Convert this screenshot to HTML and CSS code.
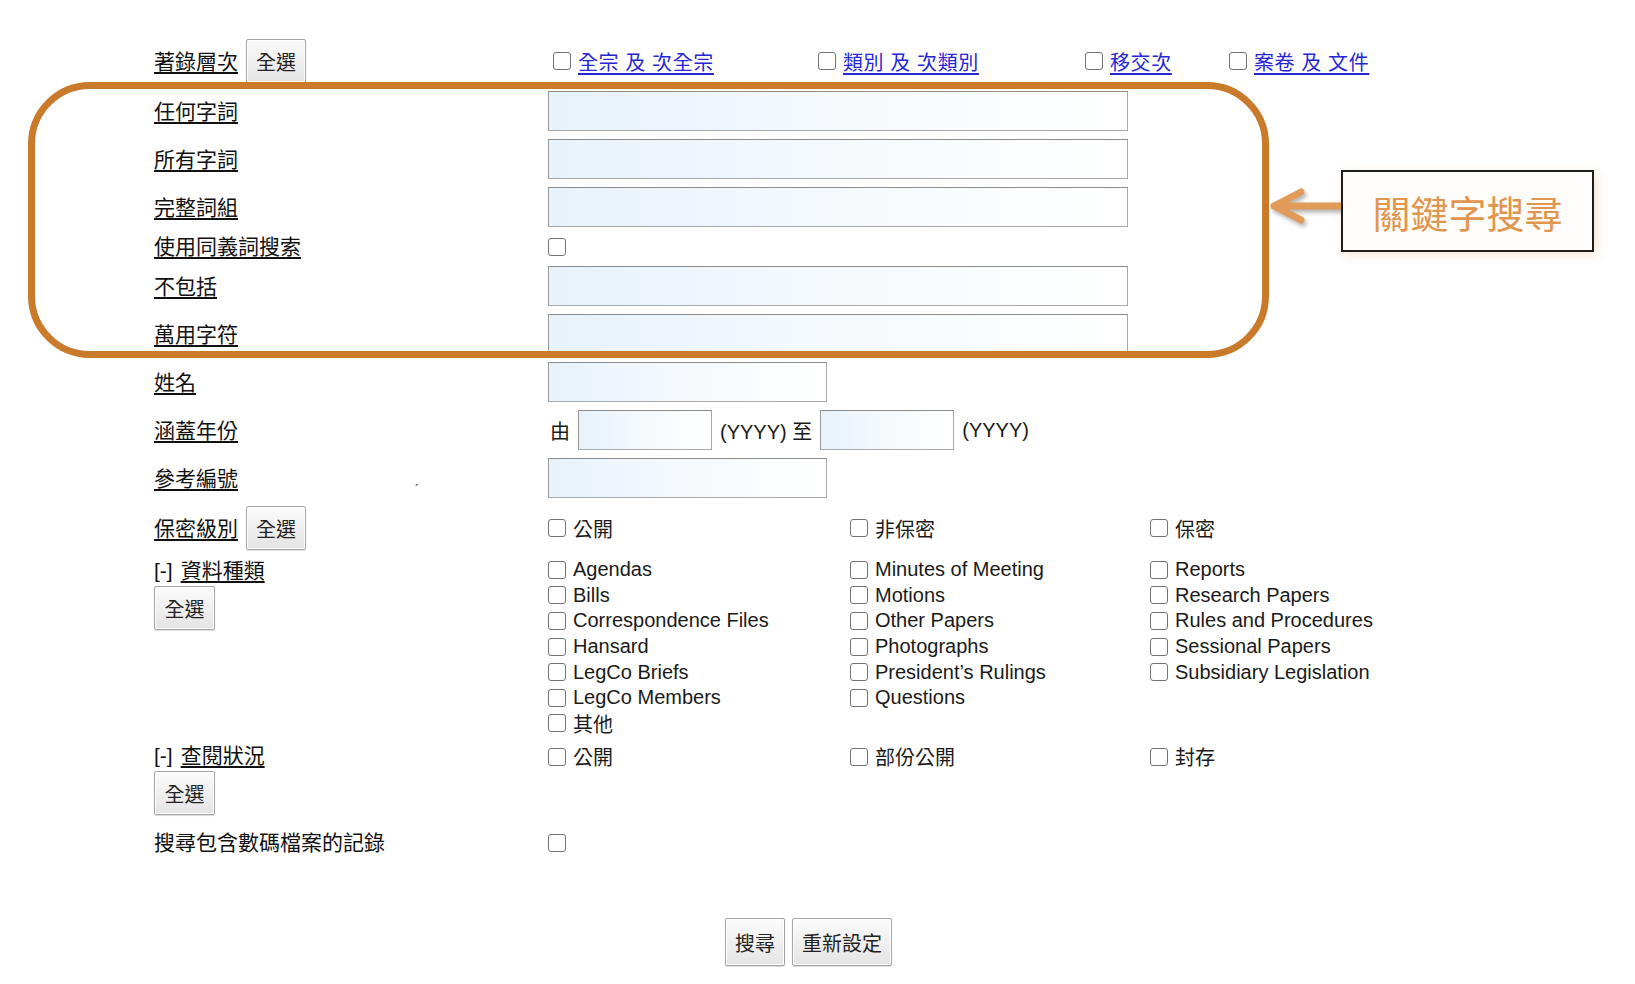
FILE: index.html
```html
<!DOCTYPE html>
<html lang="zh-Hant">
<head>
  <meta charset="UTF-8">
  <meta name="viewport" content="width=device-width, initial-scale=1.0">
  <title>進階搜尋</title>
  <link rel="stylesheet" href="styles.css">
</head>
<body>
  <div class="page">
    <form class="search-form">
      <!-- 著錄層次 -->
      <div class="row">
        <div class="label"><u>著錄層次</u> <button type="button" class="btn">全選</button></div>
        <div class="levels">
          <label class="opt"><input type="checkbox"><a href="#">全宗 及 次全宗</a></label>
          <label class="opt"><input type="checkbox"><a href="#">類別 及 次類別</a></label>
          <label class="opt"><input type="checkbox"><a href="#">移交次</a></label>
          <label class="opt"><input type="checkbox"><a href="#">案卷 及 文件</a></label>
        </div>
      </div>

      <div class="row">
        <div class="label"><u>任何字詞</u></div>
        <div><input type="text" class="field"></div>
      </div>
      <div class="row">
        <div class="label"><u>所有字詞</u></div>
        <div><input type="text" class="field"></div>
      </div>
      <div class="row">
        <div class="label"><u>完整詞組</u></div>
        <div><input type="text" class="field"></div>
      </div>
      <div class="row">
        <div class="label"><u>使用同義詞搜索</u></div>
        <div class="opt single"><input type="checkbox"></div>
      </div>
      <div class="row">
        <div class="label"><u>不包括</u></div>
        <div><input type="text" class="field"></div>
      </div>
      <div class="row">
        <div class="label"><u>萬用字符</u></div>
        <div><input type="text" class="field"></div>
      </div>
      <div class="row">
        <div class="label"><u>姓名</u></div>
        <div><input type="text" class="field mid"></div>
      </div>
      <div class="row">
        <div class="label"><u>涵蓋年份</u></div>
        <div class="years">
          <span>由</span>
          <input type="text" class="field short">
          <span>(YYYY) 至</span>
          <input type="text" class="field short">
          <span>(YYYY)</span>
        </div>
      </div>
      <div class="row">
        <div class="label"><u>參考編號</u><span class="tick">ˏ</span></div>
        <div><input type="text" class="field mid"></div>
      </div>

      <!-- 保密級別 -->
      <div class="row">
        <div class="label"><u>保密級別</u> <button type="button" class="btn">全選</button></div>
        <div class="cols">
          <label class="opt"><input type="checkbox">公開</label>
          <label class="opt"><input type="checkbox">非保密</label>
          <label class="opt"><input type="checkbox">保密</label>
        </div>
      </div>

      <!-- 資料種類 -->
      <div class="row top row-types">
        <div class="label-block">
          <div class="label">[-] <u>資料種類</u></div>
          <button type="button" class="btn">全選</button>
        </div>
        <div class="cols">
          <div class="list">
            <label class="opt"><input type="checkbox">Agendas</label>
            <label class="opt"><input type="checkbox">Bills</label>
            <label class="opt"><input type="checkbox">Correspondence Files</label>
            <label class="opt"><input type="checkbox">Hansard</label>
            <label class="opt"><input type="checkbox">LegCo Briefs</label>
            <label class="opt"><input type="checkbox">LegCo Members</label>
            <label class="opt"><input type="checkbox">其他</label>
          </div>
          <div class="list">
            <label class="opt"><input type="checkbox">Minutes of Meeting</label>
            <label class="opt"><input type="checkbox">Motions</label>
            <label class="opt"><input type="checkbox">Other Papers</label>
            <label class="opt"><input type="checkbox">Photographs</label>
            <label class="opt"><input type="checkbox">President’s Rulings</label>
            <label class="opt"><input type="checkbox">Questions</label>
          </div>
          <div class="list">
            <label class="opt"><input type="checkbox">Reports</label>
            <label class="opt"><input type="checkbox">Research Papers</label>
            <label class="opt"><input type="checkbox">Rules and Procedures</label>
            <label class="opt"><input type="checkbox">Sessional Papers</label>
            <label class="opt"><input type="checkbox">Subsidiary Legislation</label>
          </div>
        </div>
      </div>

      <!-- 查閱狀況 -->
      <div class="row top row-access">
        <div class="label-block">
          <div class="label">[-] <u>查閱狀況</u></div>
          <button type="button" class="btn">全選</button>
        </div>
        <div class="cols">
          <label class="opt"><input type="checkbox">公開</label>
          <label class="opt"><input type="checkbox">部份公開</label>
          <label class="opt"><input type="checkbox">封存</label>
        </div>
      </div>

      <div class="row row-digital">
        <div class="label">搜尋包含數碼檔案的記錄</div>
        <div class="opt single"><input type="checkbox"></div>
      </div>

      <div class="actions">
        <button type="submit" class="btn big">搜尋</button>
        <button type="reset" class="btn big">重新設定</button>
      </div>
    </form>

    <!-- annotation -->
    <div class="highlight"></div>
    <svg class="arrow" width="80" height="44" viewBox="0 0 80 44">
      <path d="M9 22 H78 M36 8 L9 22 L36 36" fill="none" stroke="#df9b57" stroke-width="7" stroke-linecap="round" stroke-linejoin="round"/>
    </svg>
    <div class="callout">關鍵字搜尋</div>
  </div>
</body>
</html>
```

FILE: styles.css
```css
* { box-sizing: border-box; }
body {
  margin: 0;
  background: #fff;
  color: #1a1a1a;
  font-family: "Liberation Sans", "Noto Sans CJK TC", sans-serif;
  font-size: 20px;
}
.page {
  position: relative;
  width: 1635px;
  height: 984px;
  overflow: hidden;
}
.search-form {
  width: 1309px;
  margin-left: 154px;
  padding-top: 35px;
}
.row {
  display: grid;
  grid-template-columns: 394px 1fr;
  align-items: center;
  padding: 4px 0;
}
.row.top { align-items: start; }
.label {
  display: flex;
  align-items: center;
  gap: 8px;
  font-size: 21px;
  line-height: 23px;
  color: #111;
}
.label u { text-underline-offset: 3px; }
.tick {
  font-size: 14px;
  margin-left: 168px;
  color: #444;
}

/* inputs */
.field {
  display: block;
  width: 580px;
  height: 40px;
  margin: 0;
  border: 1px solid #a8a8a8;
  border-top-color: #8c8c8c;
  border-left-color: #979797;
  background: linear-gradient(90deg, #e7f2fb, #f4f9fd 45%, #fff);
  font-size: 18px;
}
.field.mid { width: 279px; }
.field.short { width: 134px; }
input[type=checkbox] {
  -webkit-appearance: none;
  appearance: none;
  width: 18px;
  height: 18px;
  margin: 0;
  flex: none;
  border: 1px solid #727272;
  border-radius: 3px;
  background: #fff;
}

/* buttons */
.btn {
  height: 44px;
  padding: 0 9px;
  white-space: nowrap;
  font-family: "Noto Sans CJK TC", sans-serif;
  font-size: 20px;
  color: #222;
  border: 1px solid #a5a5a5;
  border-radius: 2px;
  box-shadow: inset 0 0 0 1px #fff, 0 1px 1px rgba(0,0,0,.15);
  background: linear-gradient(#fbfbfb, #e4e4e4);
}
.btn.big { height: 48px; padding: 0 9px; }

/* checkbox options */
.opt {
  display: flex;
  align-items: center;
  gap: 7px;
  height: 25.6px;
  white-space: nowrap;
}
.opt.single { height: 23px; }
.opt a {
  color: #2626d6;
  letter-spacing: 0.6px;
  text-underline-offset: 3px;
}
.levels {
  display: grid;
  grid-template-columns: 265px 267px 144px auto;
  padding-left: 5px;
}
.cols {
  display: grid;
  grid-template-columns: 302px 300px 1fr;
}
.years {
  display: flex;
  align-items: center;
  gap: 8px;
  padding-left: 2px;
}

.label-block .btn {
  display: block;
  width: 61px;
  height: 44px;
  padding: 0;
  margin-top: 4px;
}
.row-types { padding: 3px 0 0; }
.row-types .label { margin-top: 2px; }
.row-access { padding: 8px 0 0; }
.row-digital { padding: 16px 0 4px; }

.actions {
  display: flex;
  justify-content: center;
  gap: 7px;
  margin-top: 60px;
}

/* annotation overlay */
.highlight {
  position: absolute;
  left: 28px;
  top: 82px;
  width: 1241px;
  height: 276px;
  border: 7px solid #c97a2b;
  border-radius: 62px;
  pointer-events: none;
}
.arrow {
  position: absolute;
  left: 1265px;
  top: 184px;
  filter: drop-shadow(2px 3px 2px rgba(0,0,0,.3));
}
.callout {
  position: absolute;
  left: 1341px;
  top: 170px;
  width: 253px;
  height: 82px;
  display: flex;
  align-items: center;
  justify-content: center;
  border: 2px solid #1e1e1e;
  background: #fffdfb;
  box-shadow: 3px 3px 10px rgba(224,150,80,.25);
  font-family: "Noto Sans CJK TC", sans-serif;
  font-size: 38px;
  color: #e0964f;
}
```
